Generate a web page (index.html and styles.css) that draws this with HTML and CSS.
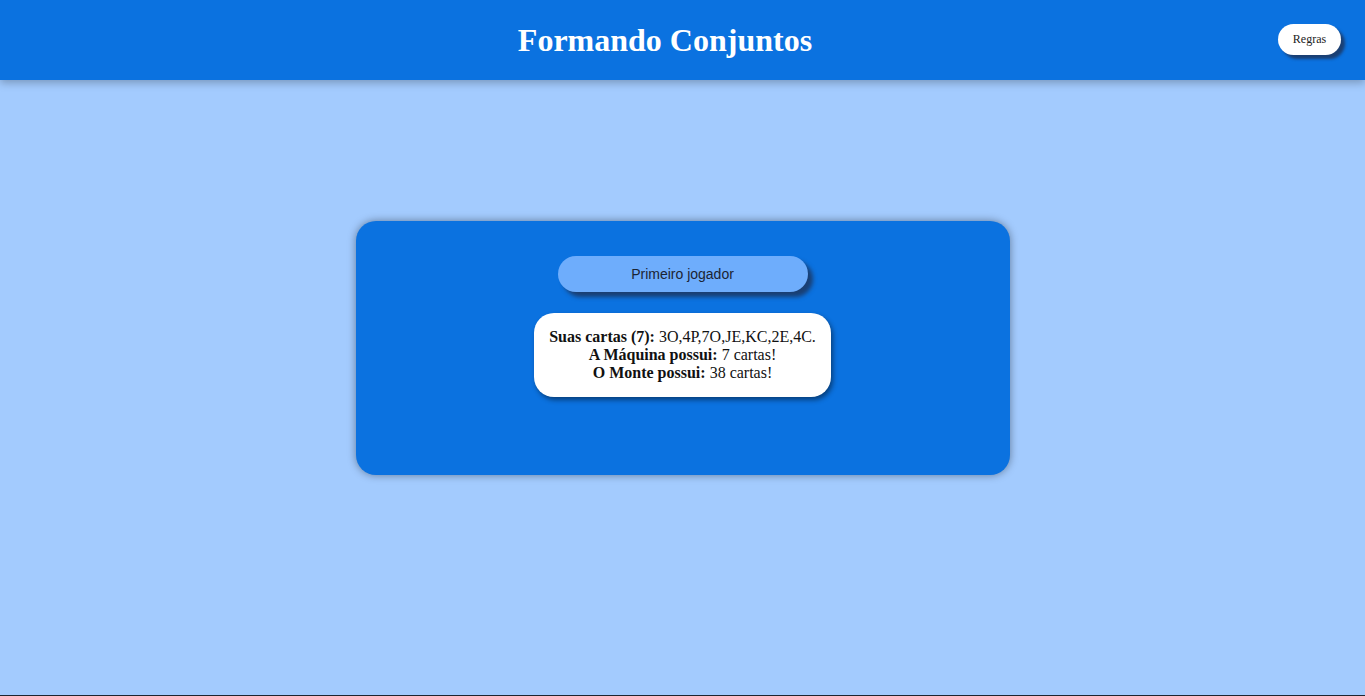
FILE: index.html
```html
<!DOCTYPE html>
<html lang="pt-BR">
<head>
<meta charset="UTF-8">
<meta name="viewport" content="width=device-width, initial-scale=1.0">
<title>Formando Conjuntos</title>
<link rel="stylesheet" href="styles.css">
</head>
<body>
    <header class="topo">
        <h1>Formando Conjuntos</h1>
        <button class="btn-regras">Regras</button>
    </header>

    <main class="mesa">
        <div class="painel">
            <button class="btn-jogador">Primeiro jogador</button>
            <div class="info">
                <b>Suas cartas (7):</b> 3O,4P,7O,JE,KC,2E,4C.<br>
                <b>A Máquina possui:</b> 7 cartas!<br>
                <b>O Monte possui:</b> 38 cartas!
            </div>
        </div>
    </main>

    <footer class="rodape"></footer>
</body>
</html>
```

FILE: styles.css
```css
html, body {
    margin: 0;
    height: 100%;
}
body {
    background-color: #a3cbfe;
    font-family: 'Liberation Serif', 'Times New Roman', serif;
    display: flex;
    flex-direction: column;
}
.topo {
    position: relative;
    height: 80px;
    background-color: #0b72e0;
    box-shadow: 0 3px 8px rgba(0, 0, 0, 0.25);
    display: flex;
    align-items: center;
    padding-right: 35px;
}
.topo h1 {
    flex: 1;
    margin: 0;
    text-align: center;
    color: white;
    font-size: 32px;
    font-weight: bold;
}
.btn-regras {
    position: absolute;
    right: 24px;
    top: 24px;
    width: 63px;
    height: 31px;
    border: none;
    border-radius: 16px;
    background-color: white;
    color: #222;
    font-family: inherit;
    font-size: 12px;
    box-shadow: 4px 4px 3px #1a3f73;
}
.mesa {
    flex: 1;
    padding-top: 141px;
}
.painel {
    width: 654px;
    height: 254px;
    box-sizing: border-box;
    margin: 0 auto;
    padding-top: 35px;
    background-color: #0b72e0;
    border-radius: 20px;
    box-shadow: 0 0 8px rgba(0, 0, 0, 0.4);
    display: flex;
    flex-direction: column;
    align-items: center;
    gap: 21px;
}
.btn-jogador {
    width: 250px;
    height: 36px;
    border: none;
    border-radius: 18px;
    background-color: #6eadfc;
    color: #1b2433;
    font-family: 'Liberation Sans', Arial, sans-serif;
    font-size: 14px;
    box-shadow: 5px 5px 4px #1a3f73;
}
.info {
    background-color: white;
    color: #111;
    border-radius: 20px;
    padding: 15px 15px;
    font-size: 16px;
    line-height: 18px;
    text-align: center;
    box-shadow: 2px 3px 5px rgba(0, 0, 0, 0.45);
}
.rodape {
    height: 0;
    border-top: 1px solid #1e2530;
}
```
